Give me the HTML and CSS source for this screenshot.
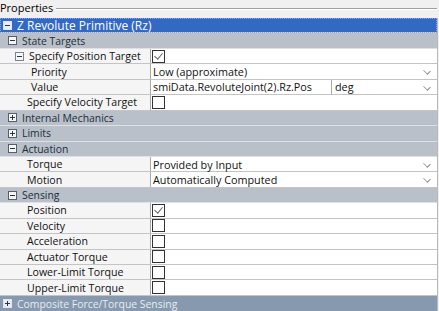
FILE: index.html
```html
<!DOCTYPE html>
<html>
<head>
<meta charset="utf-8">
<link rel="stylesheet" href="styles.css">
</head>
<body>
<div class="panel">
  <div class="title"><span class="title-text">Properties</span><span class="title-line"></span></div>
  <div class="grid">
    <div class="row top sel"><span class="exp minus"></span><span class="lbl">Z Revolute Primitive (Rz)</span></div>
    <div class="row cat"><span class="exp minus l1"></span><span class="lbl">State Targets</span></div>
    <div class="row prop"><div class="key l2"><span class="exp minus lite"></span><span>Specify Position Target</span></div><div class="val"><span class="cb on"></span></div></div>
    <div class="row prop"><div class="key l3">Priority</div><div class="val drop">Low (approximate)<span class="chev"></span></div></div>
    <div class="row prop"><div class="key l3">Value</div><div class="val split"><span class="v1">smiData.RevoluteJoint(2).Rz.Pos</span><span class="v2 drop">deg<span class="chev"></span></span></div></div>
    <div class="row prop"><div class="key l2b">Specify Velocity Target</div><div class="val"><span class="cb"></span></div></div>
    <div class="row cat"><span class="exp plus l1"></span><span class="lbl">Internal Mechanics</span></div>
    <div class="row cat"><span class="exp plus l1"></span><span class="lbl">Limits</span></div>
    <div class="row cat"><span class="exp minus l1"></span><span class="lbl">Actuation</span></div>
    <div class="row prop"><div class="key l2b">Torque</div><div class="val drop">Provided by Input<span class="chev"></span></div></div>
    <div class="row prop"><div class="key l2b">Motion</div><div class="val drop">Automatically Computed<span class="chev"></span></div></div>
    <div class="row cat"><span class="exp minus l1"></span><span class="lbl">Sensing</span></div>
    <div class="row prop"><div class="key l2b">Position</div><div class="val"><span class="cb on"></span></div></div>
    <div class="row prop"><div class="key l2b">Velocity</div><div class="val"><span class="cb"></span></div></div>
    <div class="row prop"><div class="key l2b">Acceleration</div><div class="val"><span class="cb"></span></div></div>
    <div class="row prop"><div class="key l2b">Actuator Torque</div><div class="val"><span class="cb"></span></div></div>
    <div class="row prop"><div class="key l2b">Lower-Limit Torque</div><div class="val"><span class="cb"></span></div></div>
    <div class="row prop"><div class="key l2b">Upper-Limit Torque</div><div class="val"><span class="cb"></span></div></div>
    <div class="row top comp"><span class="exp plus"></span><span class="lbl">Composite Force/Torque Sensing</span></div>
  </div>
</div>
</body>
</html>
```
FILE: styles.css
```css
html, body { margin: 0; padding: 0; }
body {
  background: #f0f0f0;
  font-family: "Open Sans", "Noto Sans", sans-serif;
  font-size: 10.6px;
  color: #111;
  width: 439px;
  height: 311px;
  overflow: hidden;
}
.panel { width: 439px; }
.title {
  display: flex;
  align-items: center;
  height: 18px;
  padding-left: 0;
}
.title-text { font-size: 11px; color: #000; line-height: 14px; margin-top: -2px; }
.title-line {
  flex: 1;
  height: 0;
  border-top: 1px solid #a0a0a0;
  border-bottom: 1px solid #fff;
  margin: 0 2px 0 3px;
  margin-top: -1px;
}
.grid {
  width: 437px;
  border-right: 1px solid #b9b9b9;
  display: flex;
  flex-direction: column;
}
.row {
  height: 15.45px;
  box-sizing: border-box;
  display: flex;
  align-items: center;
  border-bottom: 1px solid #d3d3d3;
  white-space: nowrap;
}
.top.sel {
  background: #3169c4;
  color: #fff;
  outline: 1px dotted #8aa7d8;
  outline-offset: -1px;
  font-size: 12px;
}
.top.comp { background: #8699ae; color: #e6ecf3; border-bottom: none; font-size: 10.4px; }
.top .exp { margin-left: 3px; margin-right: 5px; }
.cat { background: #b9c0c9; color: #222e3b; border-bottom: 1px solid #dde1e6; font-size: 10.4px; }
.cat .l1 { margin-left: 8px; margin-right: 5px; }
.exp {
  width: 7px;
  height: 7px;
  border: 1px solid #55606e;
  background: #f4f6f8;
  position: relative;
  flex: none;
}
.top .exp { border-color: #dfe6f0; background: #e8eef6; }
.exp.lite { border-color: #7a848f; }
.exp::before {
  content: "";
  position: absolute;
  left: 1px; top: 3px;
  width: 5px; height: 1px;
  background: #333;
}
.exp.plus::after {
  content: "";
  position: absolute;
  left: 3px; top: 1px;
  width: 1px; height: 5px;
  background: #333;
}
.prop { background: #fff; border-bottom: 1px solid #c4c4c4; }
.key {
  width: 151px;
  flex: none;
  height: 100%;
  display: flex;
  align-items: center;
  background: #f5f5f5;
  border-right: 1px solid #a8a8a8;
  box-sizing: border-box;
  color: #111;
}
.key.l2 { padding-left: 15px; }
.key.l2 .exp { margin-right: 5px; }
.key.l2b { padding-left: 27px; }
.key.l3 { padding-left: 31px; }
.val {
  flex: 1;
  height: 100%;
  display: flex;
  align-items: center;
  padding-left: 2px;
  position: relative;
  color: #111;
  font-size: 10.8px;
}
.val.split { padding-left: 0; }
.v1 { width: 178px; padding-left: 2px; height: 100%; display: flex; align-items: center; border-right: 1px solid #a8a8a8; }
.v2 { flex: 1; height: 100%; display: flex; align-items: center; padding-left: 3px; position: relative; }
.drop .chev, .v2 .chev {
  position: absolute;
  right: 7px;
  top: 4px;
  width: 5px;
  height: 5px;
  border-right: 1px solid #8a8a8a;
  border-bottom: 1px solid #8a8a8a;
  transform: rotate(45deg) scaleY(0.8);
}
.cb {
  width: 13px;
  height: 13px;
  border: 1px solid #333;
  background: #fff;
  box-sizing: border-box;
  position: relative;
  margin-left: -1px;
}
.cb.on::after {
  content: "";
  position: absolute;
  left: 3px; top: 0px;
  width: 4px; height: 7px;
  border-right: 1px solid #666;
  border-bottom: 1px solid #666;
  transform: rotate(40deg);
}
```
